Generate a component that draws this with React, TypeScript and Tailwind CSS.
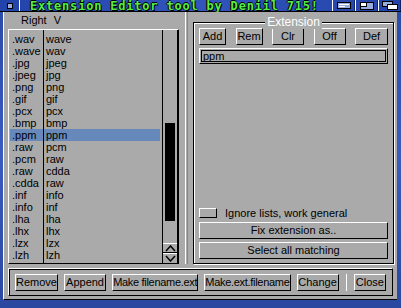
import React from "react";

const ROWS: [string, string][] = [
  [".wav", "wave"],
  [".wave", "wav"],
  [".jpg", "jpeg"],
  [".jpeg", "jpg"],
  [".png", "png"],
  [".gif", "gif"],
  [".pcx", "pcx"],
  [".bmp", "bmp"],
  [".ppm", "ppm"],
  [".raw", "pcm"],
  [".pcm", "raw"],
  [".raw", "cdda"],
  [".cdda", "raw"],
  [".inf", "info"],
  [".info", "inf"],
  [".lha", "lha"],
  [".lhx", "lhx"],
  [".lzx", "lzx"],
  [".lzh", "lzh"],
];

const SELECTED = 8;

const FONT = { fontFamily: '"Liberation Sans", Arial, sans-serif' };

function Btn({ label, className = "" }: { label: string; className?: string }) {
  return (
    <div
      className={`h-[17px] flex items-center justify-center whitespace-nowrap border border-t-white border-l-white border-b-black border-r-black text-[11px] leading-none text-black ${className}`}
    >
      {label}
    </div>
  );
}

function Gadget({ children }: { children: React.ReactNode }) {
  return (
    <div className="w-[23px] h-full flex items-center justify-center border-l border-l-white border-r border-r-[#112266]">
      {children}
    </div>
  );
}

export default function App() {
  return (
    <div
      className="w-[401px] h-[308px] flex flex-col bg-gradient-to-b from-[#2a4aa8] via-[#3a5cc0] to-[#2a48a0] overflow-hidden"
      style={FONT}
    >
      {/* title bar */}
      <div className="h-[12px] flex items-stretch bg-gradient-to-r from-[#2244aa] via-[#3355bb] to-[#2244aa] border-b border-b-black">
        <div className="w-[20px] flex items-center justify-center border-r border-r-white">
          <div className="w-[6px] h-[6px] bg-[#99aadd] border border-black" />
        </div>
        <div
          className="flex-1 flex items-center pl-[10px] text-[12px] leading-none font-bold text-[#55ee44] tracking-[0.8px] whitespace-nowrap"
          style={{
            fontFamily: '"DejaVu Sans Mono", monospace',
            textShadow: "1px 1px 0 #000, -1px 0 0 #000, 0 -1px 0 #000",
          }}
        >
          Extension Editor tool by Deniil 715!
        </div>
        <Gadget>
          <div className="w-[14px] h-[7px] border border-black bg-[#99aadd] flex flex-col justify-center gap-[1px] px-[1px]">
            <div className="h-px bg-white" />
            <div className="h-px w-[6px] bg-white" />
          </div>
        </Gadget>
        <Gadget>
          <div className="w-[14px] h-[8px] border border-black bg-[#99aadd] relative">
            <div className="absolute left-0 top-0 w-[6px] h-[4px] bg-white border-r border-b border-black" />
          </div>
        </Gadget>
        <Gadget>
          <div className="w-[16px] h-[9px] relative">
            <div className="absolute left-0 top-0 w-[11px] h-[6px] border border-black bg-[#99aadd]" />
            <div className="absolute right-0 bottom-0 w-[11px] h-[6px] border border-black bg-white" />
          </div>
        </Gadget>
      </div>

      {/* body */}
      <div className="flex-1 ml-[3px] mr-[4px] mb-[11px] bg-[#aaaaaa] border-l border-l-white border-b border-b-black flex flex-col">
        <div className="flex-1 flex">
          {/* left panel */}
          <div className="w-[175px] flex flex-col pl-[4px]">
            <div className="h-[17px] flex items-center text-[11px] text-black pl-[13px] gap-[7px]">
              <span>Right</span>
              <span>V</span>
            </div>
            <div className="flex h-[235px] border-t border-l border-t-white border-l-white border-b border-r border-b-black border-r-black">
              {/* columns */}
              <div className="flex-1 flex pl-[1px] pr-[2px]">
                <div className="w-[33px] flex flex-col pt-[3px]">
                  {ROWS.map(([a], i) => (
                    <div
                      key={i}
                      className={`h-[12px] pl-[2px] text-[11px] leading-[12px] text-black whitespace-nowrap ${i === SELECTED ? "bg-[#6688bb]" : ""}`}
                    >
                      {a}
                    </div>
                  ))}
                </div>
                <div className="w-px bg-black" />
                <div className="flex-1 flex flex-col pt-[3px]">
                  {ROWS.map(([, b], i) => (
                    <div
                      key={i}
                      className={`h-[12px] pl-[2px] text-[11px] leading-[12px] text-black whitespace-nowrap ${i === SELECTED ? "bg-[#6688bb]" : ""}`}
                    >
                      {b}
                    </div>
                  ))}
                </div>
              </div>
              {/* scrollbar */}
              <div className="w-[16px] flex flex-col border-l border-l-black border-r border-r-black">
                <div className="flex-1 flex flex-col px-[2px] pt-[93px] pb-[22px]">
                  <div className="flex-1 bg-black" />
                </div>
                <div className="h-[10px] flex items-center justify-center border-t border-t-white border-b border-b-black">
                  <svg width="11" height="7" viewBox="0 0 11 7">
                    <path d="M1 6 L5.5 1 L10 6" fill="none" stroke="black" strokeWidth="1.5" />
                  </svg>
                </div>
                <div className="h-[10px] flex items-center justify-center border-t border-t-white">
                  <svg width="11" height="7" viewBox="0 0 11 7">
                    <path d="M1 1 L5.5 6 L10 1" fill="none" stroke="black" strokeWidth="1.5" />
                  </svg>
                </div>
              </div>
            </div>
          </div>

          {/* separator */}
          <div className="w-[14px] flex justify-center gap-[1px]">
            <div className="w-px bg-white" />
            <div className="w-px bg-[#6688cc]" />
          </div>

          {/* right panel */}
          <div className="flex-1 pt-[10px] pr-[3px]">
            <div className="relative h-[242px] border border-black shadow-[inset_1px_1px_0_#fff,1px_1px_0_#fff] px-[5px] pt-[5px] pb-[4px] flex flex-col">
              <div className="absolute -top-[8px] left-0 right-0 flex justify-center">
                <span className="bg-[#aaaaaa] px-[2px] text-[12px] leading-[14px] text-white">Extension</span>
              </div>
              <div className="flex justify-between">
                <Btn label="Add" className="w-[27px]" />
                <Btn label="Rem" className="w-[27px]" />
                <Btn label="Clr" className="w-[32px]" />
                <Btn label="Off" className="w-[32px]" />
                <Btn label="Def" className="w-[33px]" />
              </div>
              <div className="mt-[3px] h-[16px] border border-t-white border-l-white border-b-black border-r-black p-px">
                <div className="h-full border border-black flex items-center pl-[1px] text-[11px] text-black">ppm</div>
              </div>
              <div className="flex-1" />
              <div className="flex items-center gap-[8px] h-[14px]">
                <div className="w-[18px] h-[10px] border border-t-white border-l-white border-b-black border-r-black" />
                <span className="text-[11px] text-black">Ignore lists, work general</span>
              </div>
              <Btn label="Fix extension as.." className="mt-[2px] h-[16px]" />
              <Btn label="Select all matching" className="mt-[3px] h-[16px]" />
            </div>
          </div>
        </div>

        {/* bottom bar */}
        <div className="h-[28px] mx-[4px] mb-[3px] mt-[4px] border border-t-white border-l-white border-b-black border-r-black shadow-[inset_1px_1px_0_#000] flex items-center px-[6px] gap-[6px]">
          <Btn label="Remove" className="w-[43px]" />
          <Btn label="Append" className="w-[43px]" />
          <Btn label="Make filename.ext" className="w-[88px] tracking-[-0.3px]" />
          <Btn label="Make.ext.filename" className="w-[88px] tracking-[-0.3px]" />
          <Btn label="Change" className="w-[43px]" />
          <div className="w-px h-[17px] bg-black border-r border-r-white ml-[1px] mr-[1px]" />
          <Btn label="Close" className="w-[33px]" />
        </div>
      </div>
    </div>
  );
}
